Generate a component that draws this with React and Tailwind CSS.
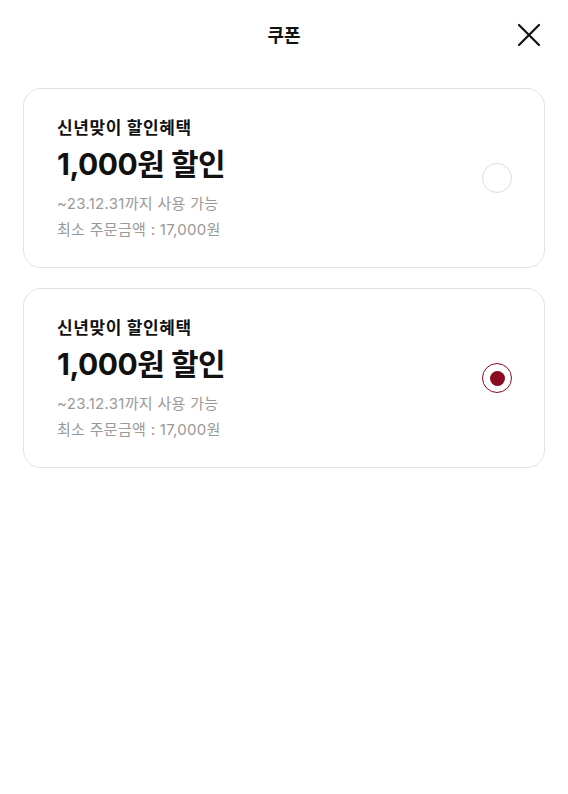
import React, { useState } from 'react';

const coupons = [
  { id: 1, title: '신년맞이 할인혜택', amount: '1,000원 할인', until: '~23.12.31까지 사용 가능', min: '최소 주문금액 : 17,000원' },
  { id: 2, title: '신년맞이 할인혜택', amount: '1,000원 할인', until: '~23.12.31까지 사용 가능', min: '최소 주문금액 : 17,000원' },
];

function Radio({ checked }) {
  return (
    <div
      className={`w-[30px] h-[30px] rounded-full border-[1.5px] flex items-center justify-center shrink-0 ${
        checked ? 'border-[#8a0b21]' : 'border-[#dcdcdc]'
      }`}
    >
      {checked && <div className="w-[15px] h-[15px] rounded-full bg-[#8a0b21]" />}
    </div>
  );
}

function App() {
  const [selected, setSelected] = useState(2);

  return (
    <div className="min-h-screen bg-white font-['Inter','Noto_Sans_CJK_KR',sans-serif] text-[#111]">
      <header className="relative h-[70px] flex items-center justify-center">
        <h1 className="text-[18px] font-bold">쿠폰</h1>
        <button className="absolute right-[26px] top-[22px] w-[26px] h-[26px] flex items-center justify-center">
          <svg width="24" height="24" viewBox="0 0 24 24" fill="none" stroke="#111" strokeWidth="2.2" strokeLinecap="round">
            <path d="M2 2 L22 22 M22 2 L2 22" />
          </svg>
        </button>
      </header>

      <div className="px-[23px] pt-[18px] flex flex-col gap-[20px]">
        {coupons.map((c) => (
          <div
            key={c.id}
            onClick={() => setSelected(c.id)}
            className="h-[180px] rounded-[18px] border border-[#e3e3e3] flex items-center justify-between pl-[33px] pr-[32px] cursor-pointer"
          >
            <div className="flex flex-col pt-[3px]">
              <p className="text-[17px] font-semibold leading-[24px] tracking-[0.6px]">{c.title}</p>
              <p className="text-[30px] font-bold leading-[38px] tracking-[-0.5px] mt-[5px]">{c.amount}</p>
              <p className="text-[15px] leading-[26px] text-[#999] mt-[8px] tracking-[0.3px]">{c.until}</p>
              <p className="text-[15px] leading-[26px] text-[#999] tracking-[0.3px]">{c.min}</p>
            </div>
            <Radio checked={selected === c.id} />
          </div>
        ))}
      </div>
    </div>
  );
}

export default App;
